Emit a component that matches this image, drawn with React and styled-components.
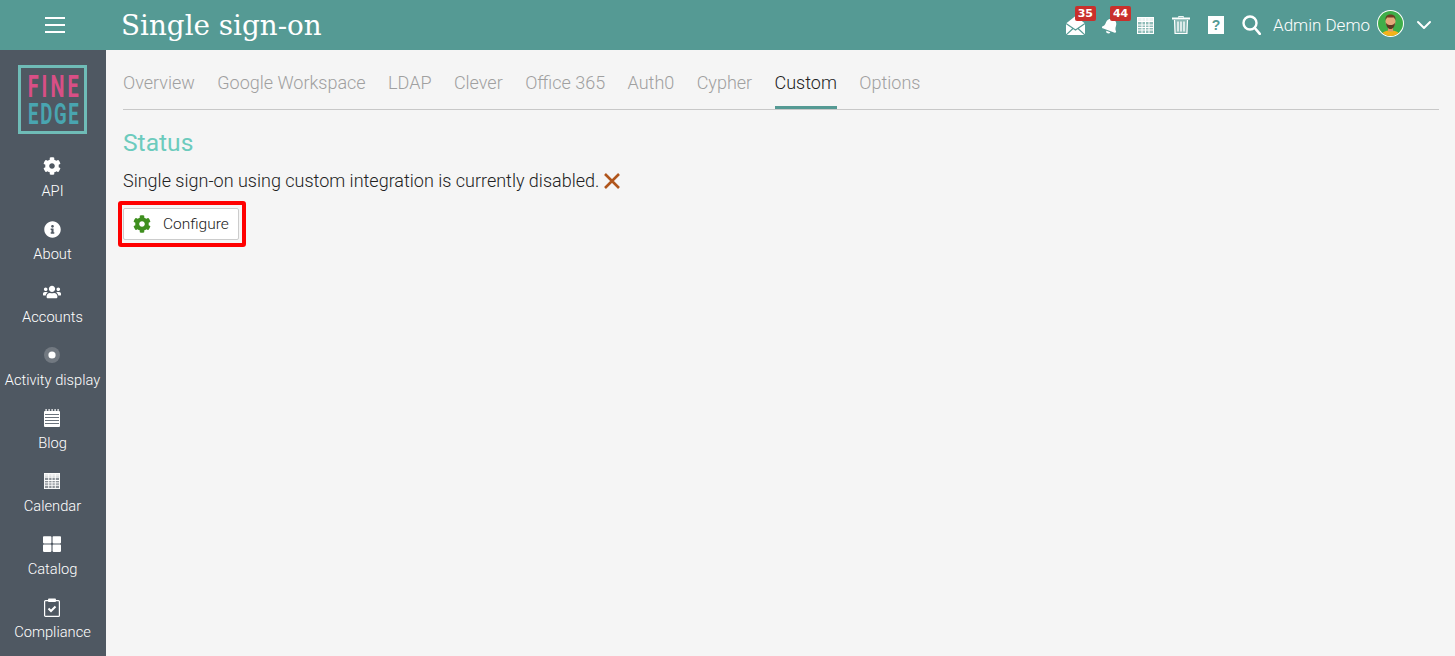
import React from "react";
import styled, { createGlobalStyle } from "styled-components";
import { FaCog, FaInfoCircle, FaUsers, FaThLarge, FaBell } from "react-icons/fa";
import { FiChevronDown } from "react-icons/fi";

const GridIcon = ({ size = 18 }) => (
  <svg width={size} height={size} viewBox="0 0 17 17" fill="none">
    <rect x="0.5" y="0.5" width="16" height="16" fill="#fff" fillOpacity="0.35" stroke="#fff" />
    <rect x="0.5" y="0.5" width="16" height="3.5" fill="#fff" fillOpacity="0.8" />
    {[4.5, 8, 11.5].map((p) => (
      <rect key={p} x={p} y="1" width="1" height="15" fill="#fff" />
    ))}
    {[4, 7.5, 10, 12.5].map((p) => (
      <rect key={p} x="1" y={p} width="15" height="1" fill="#fff" />
    ))}
  </svg>
);

const BlogIcon = () => (
  <svg width="16" height="18" viewBox="0 0 16 18">
    <rect x="0" y="2" width="16" height="16" rx="1" fill="#fff" />
    {[2, 5, 8, 11, 14].map((x) => (
      <rect key={x} x={x - 0.5} y="0" width="1.2" height="3" fill="#fff" />
    ))}
    {[5, 8, 11, 14].map((y) => (
      <rect key={y} x="1" y={y} width="14" height="1" fill="#6b737c" />
    ))}
  </svg>
);

const ComplianceIcon = () => (
  <svg width="16" height="19" viewBox="0 0 16 19" fill="none">
    <rect x="0.6" y="2.6" width="14.8" height="15.8" rx="1" stroke="#fff" strokeWidth="1.2" />
    <rect x="4" y="0.5" width="8" height="3.5" rx="1" fill="#fff" />
    <path d="M4.5 10.500l2.500 2.500 4.500-4.500" stroke="#fff" strokeWidth="2" />
  </svg>
);

const RadioIcon = () => (
  <svg width="16" height="16" viewBox="0 0 16 16">
    <circle cx="8" cy="8" r="8" fill="#fff" opacity="0.2" />
    <circle cx="8" cy="8" r="3.6" fill="#fff" />
  </svg>
);

const EnvelopeIcon = () => (
  <svg width="19" height="19" viewBox="0 0 19 19">
    <path d="M0 7.500L9.500 0 19 7.500V19H0z" fill="#fff" />
    <path d="M0 7.500l9.500 6.500 9.500-6.500M0 19l7-6.500M19 19l-7-6.500" fill="none" stroke="#559a94" strokeWidth="1.200" />
  </svg>
);

const TrashIcon = () => (
  <svg width="18" height="18" viewBox="0 0 18 18" fill="none">
    <path d="M6.500 1.500V0.600h5v0.900" stroke="#fff" />
    <rect x="0" y="1.500" width="18" height="2" fill="#fff" />
    <path d="M2 4h14l-0.800 14H2.800z" fill="#fff" fillOpacity="0.3" />
    <path d="M2.500 4l0.600 13.500h11.800L15.500 4" stroke="#fff" strokeWidth="1.200" />
    <path d="M6 5.500v10M9 5.500v10M12 5.500v10" stroke="#fff" strokeWidth="1.400" />
  </svg>
);

const HelpIcon = () => (
  <svg width="16" height="18" viewBox="0 0 16 18">
    <rect width="16" height="18" fill="#fff" />
    <text x="8" y="14" textAnchor="middle" fontFamily="Liberation Sans, sans-serif" fontWeight="700" fontSize="14" fill="#559a94">
      ?
    </text>
  </svg>
);

const SearchIcon = () => (
  <svg width="19" height="20" viewBox="0 0 19 20" fill="none" stroke="#fff">
    <circle cx="8" cy="8" r="6.500" strokeWidth="2.400" />
    <path d="M12.800 13l5 5.800" strokeWidth="2.600" strokeLinecap="round" />
  </svg>
);

const CrossIcon = () => (
  <svg width="16" height="16" viewBox="0 0 16 16" fill="none" stroke="#b0551b" strokeWidth="2.600">
    <path d="M1 1l14 14M15 1L1 15" />
  </svg>
);

const Avatar = () => (
  <AvatarBox width="27" height="27" viewBox="0 0 27 27">
    <defs>
      <clipPath id="av">
        <circle cx="13.500" cy="13.500" r="12.500" />
      </clipPath>
    </defs>
    <circle cx="13.500" cy="13.500" r="13.500" fill="#fff" />
    <g clipPath="url(#av)">
      <rect width="27" height="27" fill="#3fae49" />
      <path d="M4 27c0-4.500 4-6.500 9.500-6.500S23 22.500 23 27z" fill="#f5b21a" />
      <rect x="11" y="16" width="5" height="5.500" fill="#d99a6c" />
      <ellipse cx="13.500" cy="11.500" rx="5" ry="6" fill="#e5aa7b" />
      <path d="M8.500 10c-0.500-4 2-5.500 5-5.500s5.500 1.500 5 5.500l-1.500-2.500h-7z" fill="#6b3f22" />
      <path d="M8.800 12.500c0.700 5 2.700 6.500 4.700 6.500s4-1.500 4.700-6.500c-1 2-2.700 2.500-4.700 2.500s-3.700-0.500-4.700-2.500z" fill="#5a3a22" />
    </g>
  </AvatarBox>
);

const sideItems = [
  { label: "API", icon: <FaCog size={18} /> },
  { label: "About", icon: <FaInfoCircle size={17} /> },
  { label: "Accounts", icon: <FaUsers size={18} /> },
  { label: "Activity display", icon: <RadioIcon /> },
  { label: "Blog", icon: <BlogIcon /> },
  { label: "Calendar", icon: <GridIcon size={16} /> },
  { label: "Catalog", icon: <FaThLarge size={18} /> },
  { label: "Compliance", icon: <ComplianceIcon /> },
];

const tabs = ["Overview", "Google Workspace", "LDAP", "Clever", "Office 365", "Auth0", "Cypher", "Custom", "Options"];

export default function App() {
  return (
    <Page>
      <GlobalStyle />
      <Header>
        <MenuCell>
          <Burger>
            <span />
            <span />
            <span />
          </Burger>
        </MenuCell>
        <Title>Single sign-on</Title>
        <Tools>
          <Tool>
            <EnvelopeIcon />
            <Badge>35</Badge>
          </Tool>
          <Tool>
            <TiltedBell size={17} />
            <Badge>44</Badge>
          </Tool>
          <Tool>
            <GridIcon size={17} />
          </Tool>
          <Tool>
            <TrashIcon />
          </Tool>
          <Tool>
            <HelpIcon />
          </Tool>
          <Tool>
            <SearchIcon />
          </Tool>
          <UserName>Admin Demo</UserName>
          <Avatar />
          <Chevron>
            <FiChevronDown size={24} />
          </Chevron>
        </Tools>
      </Header>
      <Body>
        <Sidebar>
          <Logo>
            <LogoLine $color="#d84f86" $size={32} $spacing={5}>
              FINE
            </LogoLine>
            <LogoLine $color="#49a5b0" $size={30} $spacing={2.7}>
              EDGE
            </LogoLine>
          </Logo>
          {sideItems.map((item) => (
            <SideItem key={item.label}>
              <SideIcon>{item.icon}</SideIcon>
              <SideLabel>{item.label}</SideLabel>
            </SideItem>
          ))}
        </Sidebar>
        <Main>
          <TabBar>
            {tabs.map((tab) => (
              <Tab key={tab} $active={tab === "Custom"}>
                {tab}
              </Tab>
            ))}
          </TabBar>
          <Heading>Status</Heading>
          <Message>
            Single sign-on using custom integration is currently disabled.
            <CrossIcon />
          </Message>
          <Highlight>
            <ConfigureButton>
              <FaCog size={18} color="#3f8f1f" />
              Configure
            </ConfigureButton>
          </Highlight>
        </Main>
      </Body>
    </Page>
  );
}

const GlobalStyle = createGlobalStyle`
  html, body {
    margin: 0;
    padding: 0;
    background: #f5f5f5;
  }
  body {
    font-family: Roboto, "Liberation Sans", sans-serif;
  }
`;

const Page = styled.div`
  height: 100vh;
  display: flex;
  flex-direction: column;
  overflow: hidden;
`;

const Header = styled.header`
  height: 50px;
  flex: none;
  display: flex;
  align-items: center;
  background: #559a94;
  color: #fff;
`;

const MenuCell = styled.div`
  width: 106px;
  flex: none;
  display: flex;
  justify-content: center;
`;

const Burger = styled.div`
  width: 20px;
  display: flex;
  flex-direction: column;
  gap: 5px;
  margin-left: 4px;
  span {
    height: 2px;
    background: #fff;
  }
`;

const Title = styled.h1`
  margin: 0 0 0 15px;
  font-family: "DejaVu Serif", serif;
  font-weight: 400;
  font-size: 27.8px;
`;

const Tools = styled.div`
  margin-left: auto;
  display: flex;
  align-items: center;
  padding-right: 19px;
`;

const Tool = styled.div`
  position: relative;
  width: 35.2px;
  height: 20px;
  display: flex;
  align-items: center;
  justify-content: center;
`;

const TiltedBell = styled(FaBell)`
  transform: rotate(20deg);
`;

const Badge = styled.span`
  position: absolute;
  top: -9px;
  left: 17px;
  width: 21px;
  height: 15px;
  border-radius: 2px;
  background: #c9302c;
  text-align: center;
  font-family: "DejaVu Sans", sans-serif;
  font-size: 11px;
  font-weight: 700;
  line-height: 15px;
`;

const UserName = styled.span`
  margin: 0 7px 0 4px;
  font-size: 17px;
  font-weight: 300;
`;

const AvatarBox = styled.svg`
  margin-bottom: 3px;
`;

const Chevron = styled.div`
  display: flex;
  margin-left: 8px;
`;

const Body = styled.div`
  flex: 1;
  display: flex;
  min-height: 0;
`;

const Sidebar = styled.nav`
  width: 106px;
  flex: none;
  background: #4f5862;
  color: #fff;
  display: flex;
  flex-direction: column;
  align-items: center;
  padding-top: 15px;
`;

const Logo = styled.div`
  width: 63px;
  height: 63px;
  border: 3px solid #6fbcb7;
  margin-right: 1px;
  margin-bottom: 21px;
  flex: none;
  display: flex;
  flex-direction: column;
  align-items: center;
  justify-content: center;
`;

const LogoLine = styled.div`
  color: ${(p) => p.$color};
  font-size: ${(p) => p.$size}px;
  line-height: 28px;
  font-weight: 700;
  letter-spacing: ${(p) => p.$spacing}px;
  margin-right: -${(p) => p.$spacing}px;
  transform: scaleX(0.62);
`;

const SideItem = styled.div`
  height: 63px;
  flex: none;
  width: 105px;
  margin-right: 1px;
  display: flex;
  flex-direction: column;
  align-items: center;
`;

const SideIcon = styled.div`
  height: 22px;
  margin-right: 1px;
  display: flex;
  align-items: center;
  justify-content: center;
`;

const SideLabel = styled.div`
  margin-top: 5px;
  font-size: 14.7px;
  font-weight: 300;
  line-height: 18px;
  white-space: nowrap;
`;

const Main = styled.main`
  flex: 1;
  padding: 0 16px 0 17px;
`;

const TabBar = styled.div`
  height: 59px;
  display: flex;
  gap: 22.4px;
  border-bottom: 1px solid #c8c8c8;
`;

const Tab = styled.div`
  height: 59px;
  box-sizing: border-box;
  padding-top: 22px;
  font-size: 18px;
  font-weight: 300;
  line-height: 22px;
  color: ${(p) => (p.$active ? "#222" : "#a0a0a0")};
  border-bottom: 3px solid ${(p) => (p.$active ? "#559a94" : "transparent")};
`;

const Heading = styled.h2`
  margin: 18px 0 0;
  font-size: 24.6px;
  font-weight: 400;
  line-height: 30px;
  color: #6ccbbd;
`;

const Message = styled.p`
  margin: 11px 0 0;
  display: flex;
  align-items: center;
  gap: 5px;
  font-size: 18px;
  font-weight: 300;
  line-height: 24px;
  color: #222;
`;

const Highlight = styled.div`
  margin: 8px 0 0 -5px;
  width: fit-content;
  border: 4px solid #f00;
  border-radius: 3px;
  padding: 3px 3px 3px 1px;
`;

const ConfigureButton = styled.button`
  height: 32px;
  width: 116px;
  box-sizing: border-box;
  padding: 0 0 0 9px;
  display: flex;
  align-items: center;
  gap: 12px;
  background: #fff;
  border: 1px solid #ccc;
  border-radius: 2px;
  font-family: Roboto, sans-serif;
  font-size: 15.5px;
  font-weight: 300;
  color: #222;
`;
